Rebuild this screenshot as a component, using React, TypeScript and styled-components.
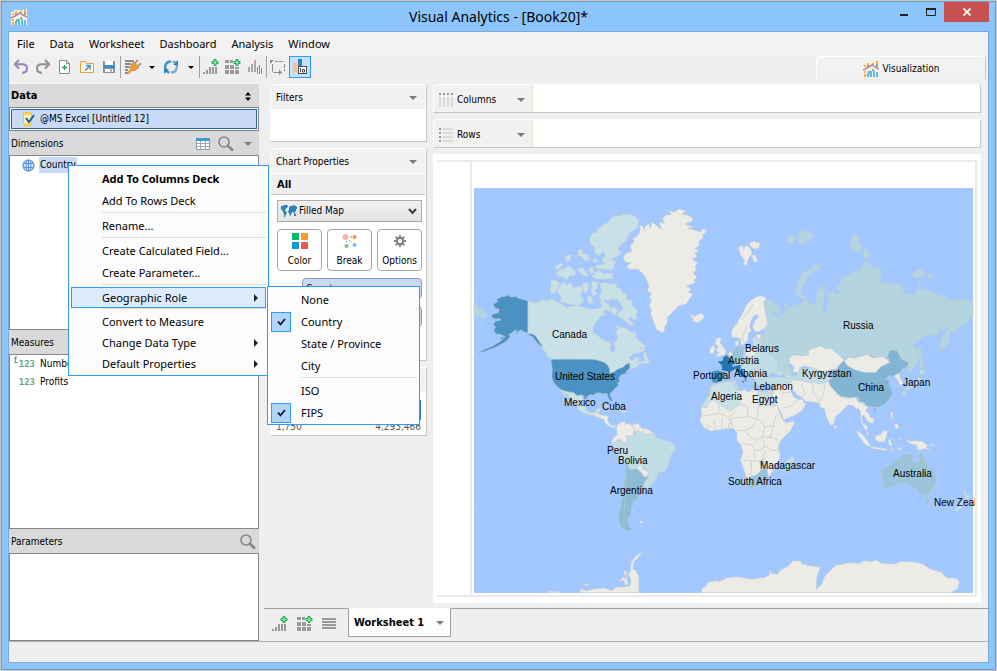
import React from "react";
import styled, { createGlobalStyle, css } from "styled-components";

const UI_FONT = '"DejaVu Sans Condensed", "DejaVu Sans", sans-serif';
const MENU_FONT = '"Noto Sans", "Open Sans", sans-serif';

const GlobalStyle = createGlobalStyle`
  *, *::before, *::after { box-sizing: border-box; }
  body { margin: 0; background: #c9c9c9; }
  button, select { font: inherit; color: inherit; }
  button { border: 0; padding: 0; background: none; text-align: left; }
  ul { list-style: none; margin: 0; padding: 0; }
  h1, h2, h3 { margin: 0; font-size: inherit; font-weight: inherit; }
  svg { display: block; flex: none; }
`;

/* ---------- window frame ---------- */

const Page = styled.div`
  min-height: 100vh;
  padding: 1px;
  display: flex;
  font: 10px/16px ${UI_FONT};
  color: #000;
`;
const Window = styled.div`
  flex: 1;
  min-width: 0;
  display: flex;
  flex-direction: column;
  border: 1px solid #6c9bc6;
  background: #8bc5fb;
  padding: 0 6px 6px;
`;
const TitleBar = styled.header`
  position: relative;
  height: 29px;
  display: flex;
  align-items: center;
  justify-content: space-between;
  padding-left: 3px;
`;
const Title = styled.h1`
  flex: 1;
  text-align: center;
  font: 400 14px/20px ${MENU_FONT};
  padding-left: 80px;
`;
const WindowButtons = styled.div`
  display: flex;
  align-self: flex-start;
`;
const WindowButton = styled.button<{ $close?: boolean }>`
  width: ${(p) => (p.$close ? 45 : 27)}px;
  height: 20px;
  display: grid;
  place-items: center;
  ${(p) => p.$close && css`background: #c75050;`}
`;
const Client = styled.div`
  flex: 1;
  display: flex;
  flex-direction: column;
  border: 1px solid #7ba9d3;
  background: #efefef;
`;
const MenuBar = styled.nav`
  display: flex;
  height: 23px;
  padding-left: 2px;
  background: #f3f3f3;
  font: 11px/24px ${MENU_FONT};
`;
const MenuBarItem = styled.button`
  padding: 0 6px;
  margin-right: 3px;
`;
const ToolRow = styled.div`
  display: flex;
  justify-content: space-between;
  height: 28px;
`;
const Toolbar = styled.div`
  display: flex;
  align-items: center;
  height: 24px;
  padding-left: 1px;
`;
const ToolButton = styled.button<{ $active?: boolean; $narrow?: boolean }>`
  width: ${(p) => (p.$narrow ? 17 : 22)}px;
  height: 22px;
  display: grid;
  place-items: center;
  ${(p) => p.$active && css`border: 1px solid #3399ff; background: #c4e1ff;`}
`;
const ToolDivider = styled.span`
  width: 1px;
  height: 22px;
  background: #a0a0a0;
`;
const ViewTab = styled.button`
  width: 170px;
  height: 23px;
  margin: 1px 2px 0 0;
  padding-top: 2px;
  display: flex;
  align-items: center;
  justify-content: center;
  gap: 4px;
  border-top: 1px solid #fff;
  border-left: 1px solid #fff;
  border-right: 1px solid #c8c8c8;
  border-radius: 4px 0 0 0;
  background: #f2f2f0;
`;

/* ---------- columns of the workspace ---------- */

const Workspace = styled.main`
  flex: 1;
  display: grid;
  grid-template-columns: 250px 5px minmax(0, 1fr);
  border-bottom: 1px solid #b0b0b0;
`;
const DataPane = styled.aside`
  grid-column: 1;
  display: flex;
  flex-direction: column;
`;
const PaneHeader = styled.div<{ $strong?: boolean }>`
  height: 24px;
  display: flex;
  align-items: center;
  gap: 8px;
  padding: 1px 3px 0 2px;
  background: #d9d9d9;
  ${(p) => p.$strong && css`border-top: 1px solid #f8f8f8; padding-right: 8px; font-weight: 700; font-size: 11px;`}
  h2 { flex: 1; }
`;
const IconButton = styled.button<{ $inset?: boolean }>`
  display: grid;
  place-items: center;
  ${(p) => p.$inset && css`padding: 0 4px 0 2px;`}
`;
const SourceList = styled.div`
  padding: 1px;
  border: 1px solid #828790;
  background: #fff;
`;
const SourceItem = styled.button`
  width: 100%;
  height: 20px;
  display: flex;
  align-items: center;
  gap: 5px;
  padding-left: 10px;
  border: 1px solid #2e62b8;
  background: #c8daf5;
`;
const FieldList = styled.ul<{ $grow?: number }>`
  flex: ${(p) => p.$grow ?? 1} 1 88px;
  border: 1px solid #828790;
  background: #fff;
`;
const Field = styled.li`
  position: relative;
  height: 18px;
  display: flex;
  align-items: center;
`;
const FieldIcon = styled.span`
  width: 29px;
  display: flex;
  justify-content: flex-end;
  padding-right: 4px;
  color: #6aa384;
  font: 700 9px/16px "DejaVu Sans Mono", monospace;
`;
const FieldName = styled.button<{ $selected?: boolean }>`
  padding: 0 1px;
  white-space: nowrap;
  ${(p) => p.$selected && css`background: #c8daf5;`}
`;

const Sheet = styled.section`
  grid-column: 3;
  display: flex;
  flex-direction: column;
  min-width: 0;
`;
const SheetBody = styled.div`
  flex: 1;
  display: grid;
  grid-template-columns: 158px minmax(0, 1fr);
  column-gap: 5px;
  padding: 1px 7px 5px 6px;
`;
const Shelves = styled.div`
  display: flex;
  flex-direction: column;
  gap: 7px;
`;

/* ---------- shelf panels ---------- */

const Panel = styled.section<{ $height: number }>`
  min-height: ${(p) => p.$height}px;
  margin-right: 2px;
  display: flex;
  flex-direction: column;
  border: 1px solid #fff;
  border-radius: 5px 0 0 0;
  background: #fff;
  box-shadow: 1px 1px 0 #c6c6c6;
`;
const PanelHeader = styled.div`
  height: 24px;
  display: flex;
  align-items: center;
  justify-content: space-between;
  padding: 2px 8px 0 5px;
  border-radius: 4px 0 0 0;
  background: #f1f1ef;
`;
const AllHeader = styled.div`
  height: 22px;
  padding: 3px 6px;
  border-top: 1px solid #fff;
  border-bottom: 1px solid #c6c6c6;
  background: #efeff1;
  font-weight: 700;
  font-size: 11px;
`;
const PanelBody = styled.div`
  display: flex;
  flex-direction: column;
  gap: 7px;
  padding: 5px 3px 0 6px;
`;
const Combo = styled.label`
  height: 22px;
  display: flex;
  align-items: center;
  padding: 0 4px 0 3px;
  border: 1px solid #acacac;
  background: linear-gradient(#f0f0f0, #e4e4e4);
`;
const ComboSelect = styled.select`
  flex: 1;
  min-width: 0;
  border: 0;
  padding: 0 2px;
  appearance: none;
  background: transparent;
`;
const ActionGrid = styled.div`
  display: grid;
  grid-template-columns: repeat(3, 1fr);
  gap: 5px;
`;
const ActionButton = styled.button`
  height: 42px;
  display: flex;
  flex-direction: column;
  align-items: center;
  justify-content: space-between;
  padding: 3px 0 1px;
  border: 1px solid #a6a6a6;
  border-radius: 4px;
  background: #fff;
`;
const PillRow = styled.div`
  display: flex;
  align-items: center;
  gap: 6px;
  padding-left: 3px;
`;
const Pill = styled.button<{ $tone: string }>`
  flex: 1;
  height: 21px;
  padding: 0 3px;
  border: 1px solid #8f9bb5;
  border-radius: 4px;
  background: ${(p) => p.$tone};
`;
const Ramp = styled.div`
  height: 20px;
  margin: 8px 4px 0 6px;
  background: linear-gradient(90deg, #cde3e9, #1f78b4);
`;
const RampScale = styled.div`
  display: flex;
  justify-content: space-between;
  padding: 0 4px 0 5px;
  line-height: 14px;
  color: #555;
`;

/* ---------- decks and chart ---------- */

const Canvas = styled.div`
  display: flex;
  flex-direction: column;
  gap: 7px;
  min-width: 0;
`;
const Deck = styled.section`
  height: 28px;
  display: flex;
  margin-right: 1px;
  background: #fff;
  border-radius: 5px 0 0 0;
  box-shadow: 1px 1px 0 #c6c6c6;
`;
const DeckHeader = styled.div`
  width: 100px;
  display: flex;
  align-items: center;
  gap: 4px;
  padding: 2px 7px 0 5px;
  border-top: 1px solid #fff;
  border-left: 1px solid #fff;
  border-right: 1px solid #e8e2cf;
  border-radius: 5px 0 0 0;
  background: #f1f1ef;
  h2 { flex: 1; }
`;
const Chart = styled.section`
  flex: 1;
  display: flex;
  padding: 6px 4px 6px 4px;
  background: #fff;
`;
const ChartFrame = styled.div`
  flex: 1;
  display: grid;
  grid-template-columns: 33px minmax(0, 1fr);
  border-top: 2px solid #ebebeb;
  border-bottom: 2px solid #ebebeb;
  border-right: 2px solid #ebebeb;
`;
const MapCell = styled.div`
  grid-column: 2;
  display: flex;
  padding: 26px 2px 2px;
  border-left: 2px solid #ebebeb;
  overflow: hidden;
`;
const MapSvg = styled.svg`
  flex: 1;
  min-width: 0;
  min-height: 405px;
  background: #a3c7ff;
  overflow: visible;
  font: 10px "Liberation Sans", Arial, sans-serif;
`;

/* ---------- sheet tabs, status ---------- */

const SheetTabs = styled.div`
  height: 33px;
  display: flex;
  align-items: flex-start;
  border-top: 1px solid #a0a0a0;
`;
const TabTools = styled.div`
  width: 84px;
  height: 30px;
  display: flex;
  align-items: center;
  gap: 9px;
  padding-left: 8px;
`;
const SheetTab = styled.button`
  height: 29px;
  margin-top: -1px;
  padding: 1px 6px 0 5px;
  display: flex;
  align-items: center;
  gap: 12px;
  border: 1px solid #a0a0a0;
  border-top-color: #fff;
  background: #fff;
  font-weight: 700;
  font-size: 11px;
`;
const StatusBar = styled.footer`
  height: 20px;
`;

/* ---------- context menu ---------- */

const Menu = styled.div<{ $sub?: boolean }>`
  position: absolute;
  z-index: ${(p) => (p.$sub ? 3 : 2)};
  left: ${(p) => (p.$sub ? "196px" : "58px")};
  top: ${(p) => (p.$sub ? "-1px" : "9px")};
  width: ${(p) => (p.$sub ? 153 : 201)}px;
  padding: 2px 2px ${(p) => (p.$sub ? 0 : 1)}px;
  border: 1px solid #3399ff;
  background: #fcfcfc;
  font: 11px/20px ${MENU_FONT};
`;
const MenuSlot = styled.div`
  position: relative;
`;
const MenuItem = styled.button<{ $bold?: boolean; $hot?: boolean; $short?: boolean }>`
  width: 100%;
  height: ${(p) => (p.$short ? 21 : 22)}px;
  display: flex;
  align-items: center;
  padding-right: 7px;
  border: 1px solid transparent;
  font-weight: ${(p) => (p.$bold ? 700 : 400)};
  ${(p) => p.$hot && css`border-color: #3399ff; background: #dcecfd;`}
`;
const MenuMark = styled.span<{ $checked?: boolean }>`
  width: 20px;
  height: 20px;
  margin-right: 10px;
  display: grid;
  place-items: center;
  border: 1px solid ${(p) => (p.$checked ? "#3399ff" : "transparent")};
  background: ${(p) => (p.$checked ? "#b0d5fd" : "transparent")};
`;
const MenuText = styled.span`
  flex: 1;
  white-space: nowrap;
`;
const MenuRule = styled.div`
  height: 3px;
  margin-left: 31px;
  border-top: 1px solid #dedede;
`;

/* ---------- icons ---------- */

const AppIcon = ({ plain }: { plain?: boolean }) => (
  <svg width="16" height="16" viewBox="0 0 16 16" shapeRendering="crispEdges">
    {!plain && <path d="M0 3h3V1h8v1h1V0h4v16H0z" fill="#f6f3ea" />}
    <path d="M1 4h2v2H1zM4 2h2v2H4zM9 2h2v2H9zM13 0h2v3h-2zM1 10h2v2H1zM1 13h2v3H1z" fill="#f9b233" />
    <path d="M4 4h2v3H4zM13 3h2v3h-2zM5 10h2v3H5zM9 8h2v2H9z" fill="#7fb77e" />
    <path d="M4 12h2v4H4zM7 10h2v6H7zM10 10h2v6h-2zM13 11h2v5h-2z" fill="#63b8ea" />
    <path d="M0 9l4-2 5-3 3 2 4 2" fill="none" stroke="#c07fa8" strokeWidth="1.5" shapeRendering="auto" />
  </svg>
);
const Caret = ({ color = "#7b7b7b", size = 8 }: { color?: string; size?: number }) => (
  <svg width={size} height={size / 2} viewBox="0 0 8 4"><path d="M0 0h8L4 4z" fill={color} /></svg>
);
const Undo = () => (
  <svg width="16" height="16" viewBox="0 0 16 16" fill="none" stroke="#9d80b8" strokeWidth="2">
    <path d="M6 1L1.800 5.200 6 9.500M2 5.200h7c3.500 0 5 1.600 5 4s-1.500 4.500-5 4.500" />
  </svg>
);
const Redo = () => (
  <svg width="16" height="16" viewBox="0 0 16 16" fill="none" stroke="#8e8e8e" strokeWidth="2">
    <path d="M10 1l4.200 4.200L10 9.500M14 5.200H7c-3.500 0-5 1.600-5 4s1.500 4.500 5 4.500" />
  </svg>
);
const NewFile = () => (
  <svg width="14" height="16" viewBox="0 0 14 16">
    <path d="M1.500 1.500h7l3 3v10h-10z" fill="#fff" stroke="#8a8a8a" />
    <path d="M8.500 1.500v3h3" fill="none" stroke="#8a8a8a" />
    <path d="M6.500 6v5M4 8.500h5" stroke="#2aa845" strokeWidth="1.300" />
  </svg>
);
const OpenFile = () => (
  <svg width="16" height="14" viewBox="0 0 16 14">
    <path d="M1.500 12.500v-11h5l1 2h7v9z" fill="#fff6dc" stroke="#d8a64c" />
    <path d="M6 10.500l4-4M7 5.500h4v4" fill="none" stroke="#3d8cc4" strokeWidth="1.400" />
  </svg>
);
const Save = () => (
  <svg width="14" height="14" viewBox="0 0 14 14">
    <path d="M1 1h12v12H1z" fill="#8d9398" /><path d="M3 1h8v4H3z" fill="#fff" />
    <path d="M1 5h12v3H1z" fill="#3d8cc4" /><path d="M3 9h8v3H3z" fill="#fff" /><path d="M8 9.500h2v2H8z" fill="#8d9398" />
  </svg>
);
const Plug = () => (
  <svg width="17" height="16" viewBox="0 0 17 16">
    <path d="M1 1h9v2H1zM1 4h6v2H1zM1 7h4v2H1zM1 10h3v2H1zM1 13h3v2H1z" fill="#8a8a8a" />
    <path d="M5 8l4-5 2 0 4 5 0 1-4 3H8l-3 3-2-1 3-4z" fill="#e59a3e" />
    <path d="M11 4l3-3M14 7l3-3" stroke="#8a8a8a" strokeWidth="1.600" />
  </svg>
);
const Refresh = () => (
  <svg width="16" height="16" viewBox="0 0 16 16" fill="none" strokeWidth="2.400">
    <path d="M6.500 13.500C3 13 1.800 10.500 2.200 7.500 2.600 4.500 5 2.500 8 2.500" stroke="#3d8cc4" />
    <path d="M9.500 2.500c3.500.5 4.700 3 4.300 6-.4 3-2.800 5-5.800 5" stroke="#77aed6" />
    <path d="M15 1v5h-5zM1 15v-5h5z" fill="#2f7fbc" />
  </svg>
);
const Plus = () => (
  <path d="M11 .5h2v2h2v2h-2v2h-2v-2H9v-2h2z" fill="#9be7ab" stroke="#12a84e" />
);
const AddSheet = () => (
  <svg width="16" height="16" viewBox="0 0 16 16">
    <path d="M0 13h2v2H0zM3 11h2v4H3zM6 8h2v7H6zM9 8h2v7H9zM12 8h2v7h-2z" fill="#999" /><Plus />
  </svg>
);
const AddDash = () => (
  <svg width="16" height="16" viewBox="0 0 16 16">
    <path d="M0 1h4v3H0zM5 1h3v3H5zM0 6h4v4H0zM5 6h4v4H5zM10 8h4v2h-4zM0 11h4v4H0zM5 11h4v4H5zM10 11h4v4h-4z" fill="#999" /><Plus />
  </svg>
);
const BarsIcon = () => (
  <svg width="16" height="16" viewBox="0 0 16 16">
    <path d="M1 8h2v5H1zM4 5h2v8H4zM7 1h2v12H7z" fill="#aaa" /><path d="M10 8h1v7h-1zM12 6h1v9h-1zM14 9h1v6h-1z" fill="#8a8a8a" />
  </svg>
);
const SwapIcon = () => (
  <svg width="16" height="16" viewBox="0 0 16 16" fill="none" stroke="#8a8a8a">
    <path d="M5 2.500h9" strokeDasharray="3 1" /><path d="M2.500 5v7c0 1 .5 1.500 2 1.500h5" /><path d="M14.500 5v7" strokeDasharray="4 1" />
    <path d="M0 1h4L0 5zM9 10.500l3 3-3 2.500z" fill="#8a8a8a" stroke="none" />
  </svg>
);
const HighlightIcon = () => (
  <svg width="16" height="16" viewBox="0 0 16 16">
    <path d="M1 4h4v9H1z" fill="#f2c48a" /><path d="M6 0h4v8H6z" fill="#2f7fbc" />
    <rect x="6.500" y="7.500" width="8" height="7" fill="#fff" stroke="#4a4a4a" /><path d="M8.500 9v4M10.500 13v-2.500h2V13z" stroke="#4a4a4a" fill="none" />
  </svg>
);
const SortIcon = () => (
  <svg width="6" height="9" viewBox="0 0 6 9"><path d="M3 0l3 3.500H0zM3 9l3-3.500H0z" /></svg>
);
const SourceIcon = () => (
  <svg width="13" height="14" viewBox="0 0 13 14">
    <rect x="1.500" y=".5" width="8" height="13" rx="1" fill="#fff3b8" stroke="#f3c531" /><path d="M2 1h7v2H2zM2 11h7v2H2z" fill="#f8d75a" />
    <path d="M4 6l3 4 5-7" fill="none" stroke="#1f5f9e" strokeWidth="2" />
  </svg>
);
const TableIcon = () => (
  <svg width="14" height="12" viewBox="0 0 14 12">
    <path d="M.5.500h13v11H.5z" fill="#fff" stroke="#8a9aa5" /><path d="M0 0h14v3H0z" fill="#3a9bd5" />
    <path d="M4.500 3v9M9.500 3v9M0 5.500h14M0 8.500h14" stroke="#9aa5ad" />
  </svg>
);
const Magnifier = () => (
  <svg width="16" height="16" viewBox="0 0 16 16" fill="none" stroke="#858585">
    <circle cx="6" cy="6" r="5" strokeWidth="1.600" /><path d="M9.500 9.500l5.500 5" strokeWidth="2.400" />
  </svg>
);
const Globe = () => (
  <svg width="13" height="13" viewBox="0 0 13 13" fill="none" stroke="#5a92dc">
    <circle cx="6.500" cy="6.500" r="5.500" fill="#d6e7ff" strokeWidth="1.200" /><ellipse cx="6.500" cy="6.500" rx="2.600" ry="5.500" /><path d="M1 4.500h11M1 8.500h11M6.500 1v11" />
  </svg>
);
const WorldIcon = () => (
  <svg width="16" height="12" viewBox="0 0 16 12" fill="#2d83b8">
    <path d="M0 1h2l1-1h3l1 1-1 2-1 0 0 1-1 1 0 1 2 1v1l-1 1-1 3H3V9L2 7 1 5 0 4zM8 2l1-1 2 0 1-1 3 1 1 1v2l-1 0v2l-1 1-1 2-1-2-1 0v1l-1 1 0 1-1 1-1-3-1-1 0-1 1-1zM13 8l2 1v2h-2z" />
  </svg>
);
const Chevron = () => (
  <svg width="9" height="7" viewBox="0 0 9 7"><path d="M1 1l3.500 4L8 1" fill="none" stroke="#404040" strokeWidth="2" /></svg>
);
const ColorIcon = () => (
  <svg width="16" height="16" viewBox="0 0 16 16">
    <path d="M0 0h7v7H0z" fill="#00ba6c" /><path d="M9 0h7v7H9z" fill="#fb9b2c" /><path d="M0 9h7v7H0z" fill="#0a9bd0" /><path d="M9 9h7v7H9z" fill="#f1584d" />
  </svg>
);
const BreakIcon = ({ small }: { small?: boolean }) => (
  <svg width="16" height={small ? 8 : 16} viewBox={small ? "0 0 16 8" : "0 0 16 16"}>
    <circle cx="3.500" cy="4" r="3" fill="#f4b8ab" /><circle cx="12.500" cy="4" r="2" fill="#f79b2e" />
    <path d="M8 4h2" stroke="#888" />
    {!small && (<><circle cx="4.500" cy="13" r="2" fill="#82c183" /><circle cx="12.500" cy="12" r="2" fill="#79c3f2" /><path d="M7 7l3 3M4.500 9V8" stroke="#888" strokeDasharray="1 1" /></>)}
  </svg>
);
const Gear = () => (
  <svg width="14" height="16" viewBox="0 0 14 16" stroke="#858585" fill="none">
    <circle cx="7" cy="8" r="3.200" strokeWidth="2.200" />
    <path d="M7 2v2.500M7 11.500V14M1 8h2.500M10.500 8H13M2.800 3.800l1.700 1.700M9.500 10.500l1.700 1.700M2.800 12.200l1.700-1.700M9.500 5.500l1.700-1.700" strokeWidth="2" />
  </svg>
);
const ColumnsIcon = () => (
  <svg width="14" height="14" viewBox="0 0 14 14"><path d="M0 0h2v2H0zM4 0h2v2H4zM8 0h2v2H8zM12 0h2v2h-2z" fill="#999" /><path d="M0 4h2v10H0zM4 4h2v10H4zM8 4h2v10H8zM12 4h2v10h-2z" fill="#dadada" /></svg>
);
const RowsIcon = () => (
  <svg width="14" height="14" viewBox="0 0 14 14"><path d="M0 0h2v2H0zM0 4h2v2H0zM0 8h2v2H0zM0 12h2v2H0z" fill="#999" /><path d="M4 0h10v2H4zM4 4h10v2H4zM4 8h10v2H4zM4 12h10v2H4z" fill="#dadada" /></svg>
);
const LinesIcon = () => (
  <svg width="14" height="12" viewBox="0 0 14 12"><path d="M0 0h14v2H0zM0 3h14v2H0zM0 6h14v2H0zM0 9h14v2H0z" fill="#999" /></svg>
);
const RightArrow = () => <svg width="4" height="8" viewBox="0 0 4 8"><path d="M0 0l4 4-4 4z" fill="#222" /></svg>;
const Check = () => <svg width="9" height="8" viewBox="0 0 9 8"><path d="M1 3.500l2.500 3L8 1" fill="none" stroke="#101020" strokeWidth="1.700" /></svg>;
const FxBadge = () => (
  <svg width="6" height="8" viewBox="0 0 6 8" fill="none" stroke="#6aa384"><path d="M4 .5H2.500V6M1 2.500h3M1 6.500h4" /></svg>
);

/* ---------- map ---------- */

const C = { land: "#ecebe6", pale: "#c9e0e7", light: "#c1dde5", russia: "#b4d4e0", mid: "#9bc4d9", arg: "#8fbcd4", china: "#82b4d3", us: "#4a92c2", dark: "#1f78b4" };

type Shape = [string, string];
const northAmerica: Shape[] = [
  [C.us, "M189 363L174 358 160 355 152 349 140 351 125 345 118 350 110 349 105 354 95 356 97 366 84 372 90 384 103 388 100 398 84 402 78 410 92 418 104 415 106 421 92 424 84 434 92 440 86 452 94 462 108 464 120 470 106 484 84 498 60 508 34 521 60 514 96 500 124 484 136 470 132 464 146 454 156 450 152 462 166 450 180 457 189 459 202 462 214 464 224 476 234 496 230 500 216 488 204 472 189 462Z"],
  [C.us, "M60 425l10 3 4 4-8-2ZM104 474l10-4 4 3-8 5Z"],
  [C.russia, "M27 370L44 382 52 392 68 404 60 408 56 420 46 410 36 412 27 414ZM27 340l10 4-6 3Z"],
  [C.pale, "M189 363L206 369 222 366 232 356 244 362 262 356 274 366 290 372 304 382 326 378 340 374 350 380 366 384 378 388 396 386 410 380 404 366 412 352 420 366 426 372 434 366 432 376 440 386 430 396 422 388 416 396 420 404 408 410 394 426 384 444 384 456 402 470 420 482 436 486 438 500 436 510 444 520 450 506 448 488 458 474 452 456 458 446 452 436 466 440 484 444 492 452 502 458 508 450 514 462 512 472 520 480 528 486 542 498 538 512 520 520 504 522 492 534 500 540 514 532 526 534 518 544 538 544 536 520 542 514 546 530 556 548 540 552 530 548 512 564 496 568 492 550 484 552 470 566 444 578 434 582 432 564 416 548 384 539 264 538 246 530 240 514 228 504 232 498 222 484 212 468 200 460 189 460Z"],
  [C.pale, "M404 312L420 306 436 312 456 310 454 322 466 324 474 340 486 342 484 356 500 362 502 378 512 384 520 398 512 404 518 414 508 420 496 410 490 416 504 430 506 442 494 434 480 424 466 412 456 408 462 394 474 388 466 370 458 360 440 356 430 364 418 358 412 366 402 350 410 334Z"],
  [C.pale, "M258 298L276 302 284 310 280 320 270 340 254 336 258 318ZM288 312L300 304 304 318 316 306 326 322 340 320 348 316 354 330 346 346 358 360 348 370 342 378 320 374 300 370 286 364 288 350 280 342 276 330ZM352 310L368 306 372 324 362 340 354 330ZM380 304L400 306 398 320 390 332 398 340 386 350 378 336ZM366 344L380 350 386 368 370 372ZM434 388l14-8 10 10-6 14-12-2Z"],
  [C.pale, "M268 262L286 248 296 252 288 262 276 272ZM272 280L290 264 300 266 308 256 322 266 334 274 330 286 314 288 304 300 292 290 282 292ZM300 232L308 224 320 224 316 242 304 248ZM338 212L350 206 354 222 366 222 376 240 360 244 350 230 340 228ZM338 268L352 262 362 272 372 288 360 290 346 282ZM370 266L384 260 388 276 376 282ZM380 290L392 276 404 270 414 280 446 280 442 296 420 298 396 298ZM382 242L392 232 398 242 390 250ZM358 192l8 4-2 6Z"],
  [C.pale, "M398 146L414 134 430 126 436 116 448 108 464 108 476 102 496 104 512 108 522 124 518 140 508 152 498 154 490 168 484 182 468 194 460 206 468 222 456 230 438 236 452 246 448 262 438 272 420 268 394 266 392 256 418 252 410 240 420 228 416 214 404 228 388 218 390 202 378 196 374 176 382 160 392 158Z"],
  [C.us, "M258 542L264 538 384 538 404 542 420 548 430 558 434 568 434 580 446 576 460 566 474 562 484 552 494 549 495 564 484 574 486 580 470 584 462 594 464 604 458 608 460 616 448 628 434 642 438 652 443 662 438 664 430 654 426 640 412 642 404 638 392 640 388 646 374 644 366 652 368 662 358 650 348 644 336 648 326 638 308 636 290 631 274 618 264 604 260 590 262 568Z"],
  [C.land, "M612 92L630 96 640 87 664 92 650 102 672 106 684 116 682 124 660 132 690 142 668 144 706 156 714 144 726 154 712 166 716 172 702 184 704 196 690 206 702 212 690 220 696 230 682 236 698 250 690 262 694 272 684 278 696 292 688 300 690 310 664 318 680 326 670 336 684 344 676 354 664 372 640 378 622 398 608 412 606 430 598 442 600 454 590 458 574 448 566 426 556 400 560 390 552 376 560 362 552 350 560 342 546 332 552 318 546 304 540 288 528 276 520 268 494 268 484 258 498 250 480 246 474 230 484 220 500 214 496 196 508 184 502 176 520 166 526 146 522 134 534 140 538 154 540 138 552 132 556 144 562 126 578 140 588 148 582 126 598 130 592 114 604 104 620 104Z"],
  [C.land, "M676 410L684 402 686 410 698 404 708 400 714 404 718 412 708 422 696 428 682 422 686 416Z"],
  [C.land, "M754 476L762 472 770 478 764 486 774 500 784 514 778 526 764 528 750 530 762 518 752 512 760 500 750 490ZM736 504L746 494 750 504 746 520 734 522Z"],
];
const eurasia: Shape[] = [
  [C.land, "M70 204L82 194 86 206 94 194 106 206 112 222 104 230 98 244 94 260 84 250 90 244 76 224ZM102 190L118 184 136 190 132 204 118 208 108 200ZM110 226L120 224 128 244 118 248Z"],
  [C.russia, "M212 180L230 168 238 164 240 178 236 190 220 188ZM246 172L256 154 268 146 270 160 286 150 290 162 298 168 282 180 270 186 266 194 248 188 256 180ZM354 168l8 2-4 4ZM340 200l8 2-4 4ZM404 180L412 168 420 160 430 168 432 186 442 200 436 218 422 216 406 204ZM444 222L446 206 460 212 466 230 448 236ZM362 284l8 4-4 10ZM590 280L606 270 622 270 632 284 618 292 600 294ZM634 284L646 280 654 290 640 294ZM606 304L616 302 622 312 610 316ZM208 372l8-6 4 8-6 6Z"],
  [C.russia, "M312 254L314 264 298 272 280 290 268 310 258 330 262 344 276 354 272 360 252 350 240 338 246 318 252 298 264 278 284 266 300 256Z"],
  [C.russia, "M150 360L164 360 184 372 198 384 196 398 182 400 168 392 176 406 188 412 192 404 206 402 208 390 216 384 226 382 240 374 254 372 268 364 274 356 284 362 278 370 292 370 302 374 304 346 310 330 316 314 322 316 330 334 326 352 328 370 322 390 330 400 338 384 334 370 346 366 336 350 340 340 352 338 354 330 362 340 374 342 372 330 362 322 376 310 382 292 402 284 418 272 432 272 440 264 446 250 456 242 466 252 476 262 494 262 500 276 498 304 482 312 510 308 530 314 540 308 562 314 566 340 590 344 604 340 608 324 630 328 650 334 672 346 696 350 702 362 730 360 752 358 774 366 774 408 758 424 748 436 734 440 718 458 706 452 704 476 700 490 680 518 674 500 674 486 682 468 702 446 698 440 688 450 676 448 668 466 640 466 618 474 602 490 592 502 610 508 616 530 604 550 592 572 572 576 582 550 560 536 546 512 530 512 514 532 500 534 470 526 440 528 402 532 384 538 370 524 350 508 330 504 316 500 300 510 280 512 282 524 260 528 236 524 222 534 230 548 220 552 228 566 232 584 222 588 200 576 186 566 190 550 176 530 150 520 142 510 136 480 146 460 148 440 156 432 146 400 150 380Z"],
  [C.russia, "M608 506L616 502 622 520 620 540 628 556 620 568 612 560 616 540Z"],
  [C.land, "M136 348L150 350 154 358 146 366 150 390 154 412 158 432 148 446 130 456 118 452 112 440 118 424 130 410 126 404 116 408 108 424 104 440 110 450 102 460 98 480 90 492 78 496 76 476 64 472 52 474 48 456 58 438 66 432 70 420 80 406 88 388 98 370 112 358 124 350ZM60 486L72 480 70 494 62 500Z"],
  [C.light, "M112 472L126 470 136 478 142 508 176 530 190 550 186 566 200 576 206 572 210 580 192 590 184 582 172 578 160 592 152 600 140 600 136 612 126 612 120 596 104 586 90 574 78 560 60 550 88 528 92 510 116 504Z"],
  [C.land, "M88 506L122 504 124 520 116 532 94 528ZM124 462l14 2 0 12-14-2Z"],
  [C.mid, "M52 512L64 500 84 504 88 520 80 526 82 540 72 548 58 544 50 530Z"],
  [C.land, "M40 520L52 514 50 530 56 540 46 536Z"],
  [C.dark, "M36 524L46 538 58 546 52 560 66 556 80 554 76 566 86 580 96 590 94 604 88 606 90 596 72 580 62 568 52 572 48 576 34 574 20 572 20 556 6 544 22 542 24 532ZM76 602l14 2-4 6Z"],
  [C.us, "M-10 574L8 570 34 578 28 586 20 604 4 610 -10 606 -12 590Z"],
  [C.light, "M120 604L150 594 190 590 224 596 232 606 218 614 188 612 160 618 128 616Z"],
  [C.light, "M200 574L224 586 244 592 246 570 300 562 344 572 350 600 320 612 290 606 260 602 232 600 210 590Z"],
  [C.land, "M222 534L236 524 260 528 282 524 280 510 316 498 330 506 350 506 370 524 386 538 388 544 372 556 366 566 344 570 336 578 320 574 300 566 270 558 256 562 250 576 232 576 238 562 224 548Z"],
  [C.land, "M388 544L400 532 420 534 440 528 460 524 472 534 500 530 520 540 524 548 498 560 482 578 450 578 420 570 398 558Z"],
  [C.china, "M386 542L398 558 420 570 450 578 482 578 498 560 524 548 518 528 524 512 534 510 546 512 560 538 582 548 574 562 562 566 556 576 540 584 534 592 524 586 512 598 528 602 520 610 530 628 532 642 522 658 506 674 488 682 470 680 456 678 448 666 434 668 430 650 402 654 376 648 360 634 346 618 340 604 350 594 340 580 350 572 366 568 372 556Z"],
  [C.china, "M476 686l8-2-2 8-6 2Z"],
  [C.land, "M536 588L552 580 556 594 566 612 554 616 548 600Z"],
  [C.light, "M612 574L620 566 632 576 616 586ZM612 588L620 600 612 614 596 620 576 632 566 634 572 622 590 618 604 604ZM564 632l8 4-2 10-8-4Z"],
];
const southAmerica: Shape[] = [
  [C.pale, "M286 30L308 36 326 38 336 48 348 46 360 60 358 76 366 92 376 98 390 96 396 86 410 82 404 96 396 100 392 108 372 106 350 96 338 88 336 76 322 60 308 46 298 40 306 56 320 74 312 70 300 52Z"],
  [C.land, "M388 108L398 96 404 104 430 108 428 122 434 132 446 138 454 136 450 144 438 140 424 134 416 118Z"],
  [C.pale, "M410 78L428 76 446 84 458 92 444 92 428 84ZM466 90L480 90 488 96 472 98Z"],
  [C.land, "M454 140L464 128 478 124 482 132 492 130 502 134 520 130 528 144 550 148 566 160 572 170 530 182 480 200 444 204 438 190 446 170 456 166Z"],
  [C.light, "M484 168L500 168 508 154 524 152 534 162 554 162 564 156 572 170 588 178 612 184 630 196 632 208 618 226 614 244 608 264 598 274 580 280 574 298 560 314 548 328 534 320 540 300 550 290 546 272 530 258 516 256 516 268 494 268 484 254 468 240 456 222 444 206 438 192 446 188 460 178 468 180 476 190 486 184Z"],
  [C.light, "M440 190L456 182 472 186 484 200 486 220 490 236 484 252 466 238 452 214Z"],
  [C.land, "M516 258L530 256 534 266 550 276 548 290 536 290 530 278 518 268Z"],
  [C.arg, "M482 250L490 254 492 268 518 268 530 280 536 290 550 292 540 304 534 322 536 336 520 350 516 362 504 364 506 374 498 384 500 398 494 408 488 418 492 430 494 440 506 446 490 454 474 446 462 430 460 404 466 384 470 360 476 330 480 300 482 272Z"],
  [C.land, "M524 424l8-2 2 6-8 2ZM542 514L532 518 516 536 506 546 504 568 514 572 522 590 522 638 346 638 346 626 366 632 390 626 420 624 438 632 452 622 480 620 494 618 498 600 488 580 496 576 498 548 510 530 524 520ZM474 572L484 574 486 594 490 614 478 614 478 602 462 602 474 592 484 596ZM352 610L376 614 364 618ZM246 630L256 634 278 634 288 638 254 638Z"],
];
const southEast: Shape[] = [
  [C.land, "M124 4L140 10 140 24 176 36 180 14 218 6 232 -8 246 -14 260 2 290 8 340 -20 350 20 400 52 420 50 430 66 440 60 446 74 460 80 452 92 464 104 466 112 478 116 474 130 462 128 452 118 446 104 440 112 444 130 456 138 458 150 450 148 438 126 436 96 430 84 424 88 416 78 400 74 390 84 374 100 362 110 358 128 348 138 340 126 332 104 328 86 316 82 312 70 294 66 270 64 260 52 246 44 232 30 226 30 236 50 250 58 262 58 272 74 264 90 240 106 206 120 198 98 186 78 176 52Z"],
  [C.land, "M358 134L366 142 362 148 356 142ZM450 148L464 164 458 166ZM422 150L436 158 452 174 466 196 460 200 444 186 430 166ZM466 200L490 202 516 206 514 212 488 208 466 204ZM480 168L496 164 506 150 518 154 514 172 508 186 492 186 482 180ZM520 180L534 174 526 184 532 196 522 198ZM526 96L534 96 532 110 540 120 528 114ZM536 134L548 130 552 142 544 148ZM524 204l16 4-4 4ZM544 204l20-2-10 8ZM572 176L586 184 598 182 622 184 638 196 634 202 650 216 632 206 616 210 604 206 606 196 584 192ZM640 196l16-4-4 6ZM546 176l12-2-2 6Z"],
  [C.light, "M524 68l6 2-4 12Z"],
  [C.mid, "M552 234L564 224 582 222 594 226 588 238 602 250 612 240 616 220 622 216 628 238 636 250 638 258 652 268 664 290 662 308 652 328 644 342 630 348 614 342 604 328 598 320 592 324 576 310 552 310 534 320 510 326 502 320 506 306 498 288 498 270 512 260 530 254 540 242ZM628 356L644 356 640 370 634 374Z"],
  [C.light, "M742 326L752 334 756 344 768 346 756 360 750 364 750 346ZM740 362L748 370 738 386 724 394 718 388 732 374Z"],
  [C.land, "M-14 20L0 12 30 6 60 4 64 12 60 22 76 34 90 28 98 36 112 30 132 34 160 36 174 38 170 48 186 76 194 100 204 120 214 128 236 122 238 130 226 154 206 172 194 188 190 204 196 222 192 244 176 258 174 274 160 292 146 310 128 318 106 326 96 308 92 288 84 262 76 240 84 216 78 196 66 182 66 160 56 146 30 146 0 152 -14 154 -34 142 -46 122 -40 100 -42 84 -28 60 -14 40Z"],
  [C.pale, "M-40 80L-28 60 -14 40 -14 22 0 12 60 6 58 20 72 40 76 72 44 94 10 70 -6 60 -18 70 -26 84ZM128 36L174 38 170 48 182 78 130 78Z"],
  [C.light, "M58 4L66 2 64 14 70 24 64 30 58 20ZM134 244L148 238 156 250 146 260 136 256Z"],
  [C.mid, "M100 298L112 288 126 284 140 268 156 266 160 292 146 310 128 318 104 328Z"],
  [C.light, "M232 222L238 240 226 268 214 282 206 272 210 248 224 234Z"],
  [C.land, "M-42 638L-40 626 -28 618 -20 606 0 602 14 604 34 594 60 590 84 592 110 598 130 594 150 592 164 584 162 570 170 580 188 582 196 570 218 560 234 542 256 542 262 552 290 558 316 562 306 590 304 628 320 612 330 586 342 576 362 556 400 548 436 550 444 542 470 544 484 540 500 550 540 552 560 544 600 546 624 552 644 566 664 572 680 576 690 590 704 594 722 594 734 606 728 626 708 638Z"],
];
const borders =
  "M10 70L12 98 40 112 60 96M76 72L98 80 98 110 70 112 40 118M98 110L126 118 130 78M130 118L150 140 176 136 184 100M126 118L112 140 90 152 66 152M90 152L104 170 124 180 142 172 150 140M84 190L110 196 122 212 142 208 150 190 142 172M84 240L120 244 142 240 150 214M-40 108L-10 104 10 100M0 152L-2 120M20 148L22 116M40 146L46 118M150 200L176 212 194 208M110 244L108 290M160 170L190 180M260 14L270 40 262 52M290 8L296 40 312 64M330 10L326 40 312 70M360 40L380 52 400 56M190 20L204 40 234 34M204 84L234 76 246 60M148 170L166 172 176 136M48 120L52 146M-24 128L-18 144M118 212L120 244";
const specks =
  "M120 682l8 6M396 774l6 2M160 838l3 1M172 842l4 2M195 846l3 1M42 976l4 1M62 784l2 1M718 976l2 1M470 684l20 4M516 696l4 20M1062 1008l3 1M1372 1016l2 1M1516 846l4-4M1466 1017l2 2M1440 1042l2 2M1456 796l10 6M1372 560l-10 16M1420 538l-12 18M1430 500l3 14M1470 498l10 6M1492 512l4 3M644 600l10 4M522 508l10-5M700 650l8-4M832 187l6 2M896 216l6 2M1394 260l4 4M1146 254l4 3";

const labels: [string, number, number][] = [
  ["Canada", 552, 338], ["United States", 555, 380], ["Portugal", 693, 379], ["Russia", 843, 329], ["Belarus", 745, 352],
  ["Austria", 728, 364], ["Albania", 734, 377], ["Kyrgyzstan", 802, 377], ["Lebanon", 754, 390], ["China", 858, 391],
  ["Japan", 903, 386], ["Algeria", 711, 400], ["Egypt", 752, 403], ["Mexico", 564, 406], ["Cuba", 602, 410],
  ["Peru", 607, 454], ["Bolivia", 618, 464], ["Argentina", 610, 494], ["Madagascar", 760, 469], ["South Africa", 728, 485],
  ["Australia", 893, 477], ["New Zealand", 934, 506],
];

const Region = ({ shapes, at }: { shapes: Shape[]; at: string }) => (
  <g transform={`translate(${at})`}>{shapes.map(([fill, d], i) => <path key={i} d={d} fill={fill} />)}</g>
);
const WorldMap = () => (
  <MapSvg viewBox="474 188 499 405" role="img" aria-label="Filled world map">
    <g transform="translate(465 180) scale(.33333)" stroke="#bccbd2" strokeWidth="1.6" strokeLinejoin="round">
      <Region shapes={northAmerica} at="0 0" />
      <Region shapes={southEast} at="750 600" />
      <path d={borders} transform="translate(750 600)" fill="none" stroke="#c4c6c6" strokeWidth="2" />
      <Region shapes={eurasia} at="750 0" />
      <Region shapes={southAmerica} at="0 600" />
      <path d="M487 870L484 920 478 990 476 1040M510 766L506 740 488 730M536 762L532 744M846 440L832 470 838 490M864 372L846 400 828 420" fill="none" stroke="#b0c4cc" strokeWidth="2" />
      <path d={specks} fill="none" stroke="#b2bdc6" strokeWidth="3" />
    </g>
    {labels.map(([name, x, y]) => <text key={name} x={x} y={y}>{name}</text>)}
  </MapSvg>
);

/* ---------- composition ---------- */

const Item = ({ text, bold, short, hot, arrow, checked, children }: {
  text: string; bold?: boolean; short?: boolean; hot?: boolean; arrow?: boolean; checked?: boolean; children?: React.ReactNode;
}) => (
  <MenuSlot>
    <MenuItem role="menuitem" $bold={bold} $short={short} $hot={hot}>
      <MenuMark $checked={checked}>{checked && <Check />}</MenuMark>
      <MenuText>{text}</MenuText>
      {arrow && <RightArrow />}
    </MenuItem>
    {children}
  </MenuSlot>
);

const ContextMenu = () => (
  <Menu role="menu">
    <Item text="Add To Columns Deck" bold />
    <Item text="Add To Rows Deck" />
    <MenuRule />
    <Item text="Rename..." />
    <MenuRule />
    <Item text="Create Calculated Field..." />
    <Item text="Create Parameter..." />
    <MenuRule />
    <Item text="Geographic Role" short hot arrow>
      <Menu role="menu" $sub>
        <Item text="None" />
        <Item text="Country" checked />
        <Item text="State / Province" />
        <Item text="City" />
        <MenuRule />
        <Item text="ISO" />
        <Item text="FIPS" checked />
      </Menu>
    </Item>
    <MenuRule />
    <Item text="Convert to Measure" short />
    <Item text="Change Data Type" short arrow />
    <Item text="Default Properties" short arrow />
  </Menu>
);

const Tool = ({ label, children, ...rest }: { label: string; children: React.ReactNode; $active?: boolean; $narrow?: boolean }) => (
  <ToolButton aria-label={label} {...rest}>{children}</ToolButton>
);

export default function App() {
  return (
    <>
      <GlobalStyle />
      <Page>
        <Window>
          <TitleBar>
            <AppIcon />
            <Title>Visual Analytics - [Book20]*</Title>
            <WindowButtons>
              <WindowButton aria-label="Minimize"><svg width="8" height="8" viewBox="0 0 8 8"><path d="M0 6h8v2H0z" fill="#222" /></svg></WindowButton>
              <WindowButton aria-label="Maximize"><svg width="10" height="8" viewBox="0 0 10 8"><path d="M.5 1h9v6.500h-9z" fill="none" stroke="#222" /><path d="M0 0h10v2H0z" fill="#222" /></svg></WindowButton>
              <WindowButton aria-label="Close" $close><svg width="8" height="8" viewBox="0 0 8 8"><path d="M.5.500l7 7M7.500.500l-7 7" stroke="#fff" strokeWidth="1.700" /></svg></WindowButton>
            </WindowButtons>
          </TitleBar>
          <Client>
            <MenuBar>
              {["File", "Data", "Worksheet", "Dashboard", "Analysis", "Window"].map((m) => <MenuBarItem key={m}>{m}</MenuBarItem>)}
            </MenuBar>
            <ToolRow>
              <Toolbar role="toolbar">
                <Tool label="Undo"><Undo /></Tool>
                <Tool label="Redo"><Redo /></Tool>
                <Tool label="New"><NewFile /></Tool>
                <Tool label="Open"><OpenFile /></Tool>
                <Tool label="Save"><Save /></Tool>
                <ToolDivider />
                <Tool label="Connect"><Plug /></Tool>
                <Tool label="Connect options" $narrow><Caret color="#000" size={6} /></Tool>
                <Tool label="Refresh"><Refresh /></Tool>
                <Tool label="Refresh options" $narrow><Caret color="#000" size={6} /></Tool>
                <ToolDivider />
                <Tool label="New worksheet"><AddSheet /></Tool>
                <Tool label="New dashboard"><AddDash /></Tool>
                <Tool label="Sort"><BarsIcon /></Tool>
                <ToolDivider />
                <Tool label="Swap"><SwapIcon /></Tool>
                <Tool label="Highlight" $active><HighlightIcon /></Tool>
              </Toolbar>
              <ViewTab><AppIcon plain />Visualization</ViewTab>
            </ToolRow>
            <Workspace>
              <DataPane>
                <PaneHeader $strong><h2>Data</h2><IconButton aria-label="Sort sources"><SortIcon /></IconButton></PaneHeader>
                <SourceList><SourceItem><SourceIcon />@MS Excel [Untitled 12]</SourceItem></SourceList>
                <PaneHeader>
                  <h2>Dimensions</h2>
                  <IconButton aria-label="View data"><TableIcon /></IconButton>
                  <IconButton aria-label="Find dimension"><Magnifier /></IconButton>
                  <IconButton aria-label="Dimension options" $inset><Caret /></IconButton>
                </PaneHeader>
                <FieldList $grow={100}>
                  <Field>
                    <FieldIcon><Globe /></FieldIcon>
                    <FieldName $selected>Country</FieldName>
                    <ContextMenu />
                  </Field>
                </FieldList>
                <PaneHeader><h2>Measures</h2></PaneHeader>
                <FieldList $grow={100}>
                  <Field><FieldIcon><FxBadge />123</FieldIcon><FieldName>Number of Records</FieldName></Field>
                  <Field><FieldIcon>123</FieldIcon><FieldName>Profits</FieldName></Field>
                </FieldList>
                <PaneHeader><h2>Parameters</h2><IconButton aria-label="Find parameter"><Magnifier /></IconButton></PaneHeader>
                <FieldList $grow={0} />
              </DataPane>
              <Sheet>
                <SheetBody>
                  <Shelves>
                    <Panel $height={57}><PanelHeader><h2>Filters</h2><IconButton aria-label="Filter options"><Caret /></IconButton></PanelHeader></Panel>
                    <Panel $height={212}>
                      <PanelHeader><h2>Chart Properties</h2><IconButton aria-label="Chart options"><Caret /></IconButton></PanelHeader>
                      <AllHeader>All</AllHeader>
                      <PanelBody>
                        <Combo>
                          <WorldIcon />
                          <ComboSelect aria-label="Chart type"><option>Filled Map</option></ComboSelect>
                          <Chevron />
                        </Combo>
                        <ActionGrid>
                          <ActionButton><ColorIcon />Color</ActionButton>
                          <ActionButton><BreakIcon />Break</ActionButton>
                          <ActionButton><Gear />Options</ActionButton>
                        </ActionGrid>
                        <PillRow><BreakIcon small /><Pill $tone="#c8daf5">Country</Pill></PillRow>
                        <PillRow><BreakIcon small /><Pill $tone="#cfe3d2">Profits</Pill></PillRow>
                      </PanelBody>
                    </Panel>
                    <Panel $height={68}>
                      <PanelHeader><h2>Profits</h2></PanelHeader>
                      <Ramp />
                      <RampScale><span>1,750</span><span>4,293,466</span></RampScale>
                    </Panel>
                  </Shelves>
                  <Canvas>
                    <Deck><DeckHeader><ColumnsIcon /><h2>Columns</h2><IconButton aria-label="Column options"><Caret /></IconButton></DeckHeader></Deck>
                    <Deck><DeckHeader><RowsIcon /><h2>Rows</h2><IconButton aria-label="Row options"><Caret /></IconButton></DeckHeader></Deck>
                    <Chart><ChartFrame><MapCell><WorldMap /></MapCell></ChartFrame></Chart>
                  </Canvas>
                </SheetBody>
                <SheetTabs>
                  <TabTools>
                    <IconButton aria-label="Add worksheet"><AddSheet /></IconButton>
                    <IconButton aria-label="Add dashboard"><AddDash /></IconButton>
                    <IconButton aria-label="List sheets"><LinesIcon /></IconButton>
                  </TabTools>
                  <SheetTab>Worksheet 1<Caret size={8} /></SheetTab>
                </SheetTabs>
              </Sheet>
            </Workspace>
            <StatusBar />
          </Client>
        </Window>
      </Page>
    </>
  );
}
